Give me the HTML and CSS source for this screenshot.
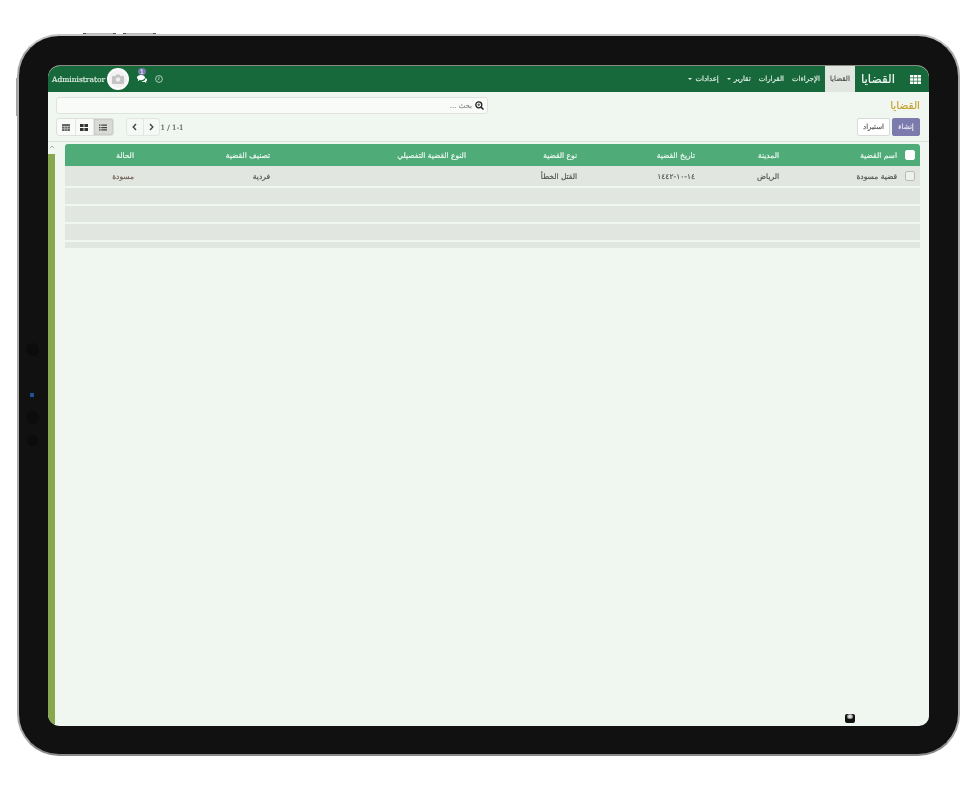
FILE: index.html
```html
<!DOCTYPE html>
<html lang="ar">
<head>
<meta charset="utf-8">
<title>القضايا</title>
<link rel="stylesheet" href="styles.css">
</head>
<body>
<div class="device">
  <span class="hw-btn hw-top-a"></span>
  <span class="hw-btn hw-top-b"></span>
  <span class="hw-side"></span>
  <span class="lens lens-a"></span>
  <span class="lens lens-b"></span>
  <span class="lens lens-c"></span>
  <span class="lens-blue"></span>
  <div class="screen" dir="rtl">
    <nav class="navbar">
      <svg class="apps" viewBox="0 0 11 9" width="11" height="9"><path fill="#fff" d="M0 0h3.300v2.500H0zM3.900 0h3.200v2.500H3.900zM7.700 0H11v2.500H7.700zM0 3.250h3.300v2.500H0zM3.900 3.250h3.200v2.500H3.900zM7.700 3.250H11v2.500H7.700zM0 6.500h3.300V9H0zM3.900 6.500h3.200V9H3.900zM7.700 6.500H11V9H7.700z"/></svg>
      <span class="brand">القضايا</span>
      <a class="menu active">القضايا</a>
      <a class="menu">الإجراءات</a>
      <a class="menu">القرارات</a>
      <a class="menu caret">تقارير</a>
      <a class="menu caret">إعدادات</a>
      <div class="systray">
        <svg class="clock" viewBox="0 0 8 8" width="8" height="8"><circle cx="4" cy="4" r="3.400" fill="none" stroke="#cfe3d6" stroke-width=".8"/><path d="M4 2v2.200L2.700 5" fill="none" stroke="#cfe3d6" stroke-width=".7"/></svg>
        <span class="chat">
          <svg viewBox="0 0 10 8" width="10" height="8"><path fill="#fff" d="M4 0c2.200 0 4 1.100 4 2.600S6.200 5.200 4 5.200c-.5 0-.9 0-1.300-.1L.8 6.200l.5-1.600C.5 4.100 0 3.400 0 2.600 0 1.100 1.800 0 4 0z"/><path fill="#fff" d="M8.700 3c.8.500 1.300 1.100 1.300 1.900 0 .7-.4 1.300-1 1.700l.4 1.400-1.700-1c-1.200.2-2.500 0-3.300-.6 2.400 0 4.200-1.500 4.300-3.400z"/></svg>
          <b class="badge">1</b>
        </span>
        <span class="user">
          <span class="avatar">
            <svg viewBox="0 0 12 10" width="12" height="10"><path fill="#c4c4c4" d="M1 2h2.500l1-1.500h3l1 1.500H11a1 1 0 0 1 1 1v6a1 1 0 0 1-1 1H1a1 1 0 0 1-1-1V3a1 1 0 0 1 1-1z"/><circle cx="6" cy="5.500" r="2.200" fill="#eee"/></svg>
          </span>
          <span class="username" dir="ltr">Administrator</span>
        </span>
      </div>
    </nav>

    <header class="panel">
      <div class="panel-left">
        <h1 class="crumb">القضايا</h1>
        <div class="actions">
          <button class="btn primary">إنشاء</button>
          <button class="btn">استيراد</button>
        </div>
      </div>
      <div class="panel-right">
        <div class="search">
          <svg viewBox="0 0 9 9" width="9" height="9"><circle cx="3.800" cy="3.800" r="3" fill="none" stroke="#222" stroke-width="1.300"/><path d="M6 6l2.500 2.500" stroke="#222" stroke-width="1.500"/><path d="M2.400 3.800h2.800M3.800 2.400v2.800" stroke="#222" stroke-width=".7"/></svg>
          <span>بحث ...</span>
        </div>
        <div class="tools" dir="ltr">
          <div class="switch">
            <span class="sw"><svg viewBox="0 0 8 7" width="8" height="7"><path fill="#666" d="M0 0h8v7H0z"/><path stroke="#e8ece8" stroke-width=".5" d="M0 2.500h8M0 4.700h8M2.700 2v5M5.300 2v5"/></svg></span>
            <span class="sw"><svg viewBox="0 0 8 7" width="8" height="7"><path fill="#333" d="M0 0h3.600v3H0zM4.400 0H8v3H4.400zM0 4h3.600v3H0zM4.400 4H8v3H4.400z"/></svg></span>
            <span class="sw on"><svg viewBox="0 0 8 7" width="8" height="7"><path fill="#444" d="M0 .5h1.500v1.300H0zM2.300 .5H8v1.300H2.300zM0 2.900h1.500v1.300H0zM2.300 2.900H8v1.300H2.300zM0 5.300h1.500v1.300H0zM2.300 5.300H8v1.300H2.300z"/></svg></span>
          </div>
          <div class="pager">
            <span class="pg"><svg viewBox="0 0 5 8" width="5" height="8"><path d="M4 1L1.200 4 4 7" fill="none" stroke="#444" stroke-width="1.400"/></svg></span>
            <span class="pg"><svg viewBox="0 0 5 8" width="5" height="8"><path d="M1 1l2.800 3L1 7" fill="none" stroke="#444" stroke-width="1.400"/></svg></span>
          </div>
          <span class="count">1 / 1-1</span>
        </div>
      </div>
    </header>

    <div class="content" dir="ltr">
      <aside class="rail">
        <svg class="chev" viewBox="0 0 6 4" width="6" height="4"><path d="M.8 3.200L3 1l2.200 2.200" fill="none" stroke="#888" stroke-width=".7"/></svg>
        <span class="rail-bar"></span>
      </aside>
      <table class="grid" dir="rtl">
        <colgroup>
          <col class="c1"><col class="c2"><col class="c3"><col class="c4"><col class="c5"><col class="c6"><col class="c7"><col class="c8">
        </colgroup>
        <thead>
          <tr>
            <th><span class="check head"></span></th>
            <th>اسم القضية</th>
            <th>المدينة</th>
            <th>تاريخ القضية</th>
            <th>نوع القضية</th>
            <th>النوع القضية التفصيلي</th>
            <th>تصنيف القضية</th>
            <th>الحالة</th>
          </tr>
        </thead>
        <tbody>
          <tr class="r-main">
            <td><span class="check"></span></td>
            <td>قضية مسودة</td>
            <td>الرياض</td>
            <td>١٤-١٠-١٤٤٢</td>
            <td>القتل الخطأ</td>
            <td></td>
            <td>فردية</td>
            <td class="state">مسودة</td>
          </tr>
          <tr class="r-empty"><td colspan="8"></td></tr>
          <tr class="r-empty"><td colspan="8"></td></tr>
          <tr class="r-empty"><td colspan="8"></td></tr>
          <tr class="r-last"><td colspan="8"></td></tr>
        </tbody>
      </table>
    </div>
    <span class="float-icon"><i></i></span>
  </div>
</div>
</body>
</html>
```
FILE: styles.css
```css
* { box-sizing: border-box; }
html, body { margin: 0; height: 100%; background: #fff; }
body { padding: 34px 0 0 17px; font-family: "DejaVu Sans", "Noto Sans", sans-serif; overflow: hidden; }

.device {
  position: relative;
  width: 943px;
  height: 722px;
  padding: 30px 29px 28px 29px;
  background: #111;
  border: 2px solid #a9a9a9;
  border-top-color: #c4c4c4;
  border-bottom-color: #8a8a8a;
  border-radius: 42px;
}
.hw-btn {
  position: absolute;
  top: -3px;
  height: 1px;
  background: linear-gradient(90deg, #555 0 3px, #bdbdbd 3px calc(100% - 3px), #555 calc(100% - 3px));
}
.hw-top-a { left: 64px; width: 33px; }
.hw-top-b { left: 104px; width: 33px; }
.hw-side { position: absolute; left: -3px; top: 42px; width: 1px; height: 38px; background: #a0a0a0; }
.lens { position: absolute; border-radius: 50%; background: #0c0c0c; }
.lens-a { left: 7px; top: 307px; width: 13px; height: 13px; }
.lens-b { left: 7px; top: 375px; width: 13px; height: 13px; }
.lens-c { left: 8px; top: 399px; width: 11px; height: 11px; }
.lens-blue { position: absolute; left: 11px; top: 357px; width: 4px; height: 4px; background: #23509c; filter: blur(.5px); }

.screen {
  position: relative;
  display: flex;
  flex-direction: column;
  height: 100%;
  background: #f0f7f0;
  border-radius: 12px 12px 10px 12px;
  overflow: hidden;
  filter: blur(.3px);
  box-shadow: 0 -1px 0 #8a8a80;
  -webkit-text-stroke: .15px currentColor;
}

.navbar {
  display: flex;
  align-items: center;
  flex: 0 0 26px;
  height: 26px;
  padding: 0 8px 0 4px;
  background: #17693c;
  color: #e6f0e8;
  font-size: 7px;
}
.apps { flex: none; }
.brand { margin: 0 15px 0 0; padding-left: 6px; font-size: 12px; color: #f2f7f3; }
.menu { display: flex; align-items: center; height: 26px; padding: 0 4px; white-space: nowrap; }
.menu.active { width: 30px; justify-content: center; padding: 0; background: #e2e6e1; color: #4a4a4a; margin-left: 1px; }
.caret::after {
  content: "";
  margin-right: 3px;
  border-top: 2.500px solid #e6f0e8;
  border-left: 2px solid transparent;
  border-right: 2px solid transparent;
}
.systray { display: flex; align-items: center; gap: 8px; margin-right: auto; }
.clock { flex: none; margin-bottom: 1px; }
.chat { position: relative; display: flex; }
.badge {
  position: absolute;
  top: -7px;
  left: 1px;
  width: 8px;
  height: 7px;
  border-radius: 50%;
  background: #7c7bad;
  color: #e8e8f4;
  font: 400 6px/7px "DejaVu Sans", sans-serif;
  text-align: center;
}
.user { display: flex; align-items: center; gap: 2px; }
.avatar {
  display: flex;
  align-items: center;
  justify-content: center;
  width: 22px;
  height: 22px;
  border-radius: 50%;
  background: #f2f2f2;
  border: 2px solid #fff;
}
.username { font: 7.500px "DejaVu Serif", "Liberation Serif", serif; color: #e6f0e8; }

.panel {
  display: flex;
  flex: 0 0 50px;
  justify-content: space-between;
  padding: 5px 9px 0 8px;
  border-bottom: 1px solid #dcdfdb;
}
.panel-left { display: flex; flex-direction: column; }
.crumb { margin: 2px 0 0; height: 19px; font-size: 10.500px; line-height: 13px; font-weight: 400; color: #c6a030; }
.actions { display: flex; gap: 2px; }
.btn {
  height: 18px;
  padding: 0;
  border: 1px solid #d8dcd8;
  border-radius: 2px;
  background: #fff;
  color: #555;
  font: 7px "DejaVu Sans", sans-serif;
  width: 33px;
}
.btn.primary { width: 28px; background: #7c7bad; border-color: #7c7bad; color: #eeeef6; }
.panel-right { display: flex; flex-direction: column; gap: 4px; width: 432px; }
.search {
  display: flex;
  align-items: center;
  gap: 3px;
  height: 17px;
  padding: 0 3px;
  border: 1px solid #dfe3df;
  border-radius: 3px;
  background: #f8fbf8;
  color: #888;
  font-size: 7px;
}
.tools { display: flex; align-items: center; }
.switch { display: flex; height: 18px; border: 1px solid #dcdfdc; border-radius: 3px; overflow: hidden; background: #f8fbf8; }
.sw { display: flex; align-items: center; justify-content: center; width: 18.500px; border-right: 1px solid #e3e6e3; }
.sw.on { background: #d8dbd6; box-shadow: inset 0 0 2px #aaa; border-right: 0; }
.pager { display: flex; height: 18px; margin-left: 12px; border: 1px solid #e3e6e3; border-radius: 3px; background: #f5f9f5; }
.pg { display: flex; align-items: center; justify-content: center; width: 16px; }
.pg + .pg { border-left: 1px solid #e3e6e3; }
.count { margin-left: 1px; font: 7.200px "DejaVu Serif", "Liberation Serif", serif; color: #555; }

.content { display: flex; flex: 1; min-height: 0; padding-top: 2px; }
.rail { display: flex; flex-direction: column; align-items: center; flex: 0 0 7px; }
.chev { flex: none; margin: 1px 0 5px; }
.rail-bar { flex: 1; width: 7px; background: #88a84f; }
.grid {
  align-self: flex-start;
  width: 855px;
  margin-left: 10px;
  table-layout: fixed;
  border-collapse: separate;
  border-spacing: 0;
  font-size: 7.500px;
  color: #505050;
}
.c1 { width: 23px; } .c2 { width: 118px; } .c3 { width: 84px; } .c4 { width: 118px; }
.c5 { width: 111px; } .c6 { width: 196px; } .c7 { width: 136px; } .c8 { width: 69px; }
th, td { padding: 0; text-align: right; font-weight: 400; white-space: nowrap; }
th { height: 22px; background: #4fab78; color: #f2faf5; }
th:first-child { border-top-right-radius: 3px; }
th:last-child { border-top-left-radius: 3px; }
td { background: #e1e6e0; border-bottom: 2px solid #f0f7f0; }
.r-main td { height: 22px; }
.r-empty td { height: 18px; }
.r-last td { height: 6px; border-bottom: 0; }
.state { color: #6e5c52; }
.check {
  display: block;
  width: 10px;
  height: 10px;
  margin-right: 5px;
  border: 1px solid #b9bdb9;
  border-radius: 2px;
  background: #eef1ee;
}
.check.head { background: #fff; border-color: #fff; }

.float-icon {
  position: absolute;
  left: 797px;
  bottom: 3px;
  width: 10px;
  height: 9px;
  border-radius: 2px;
  background: #111;
}
.float-icon i { position: absolute; left: 2px; top: 0; width: 6px; height: 5px; border-radius: 50%; background: #ddd; border: 1px solid #999; }
```
